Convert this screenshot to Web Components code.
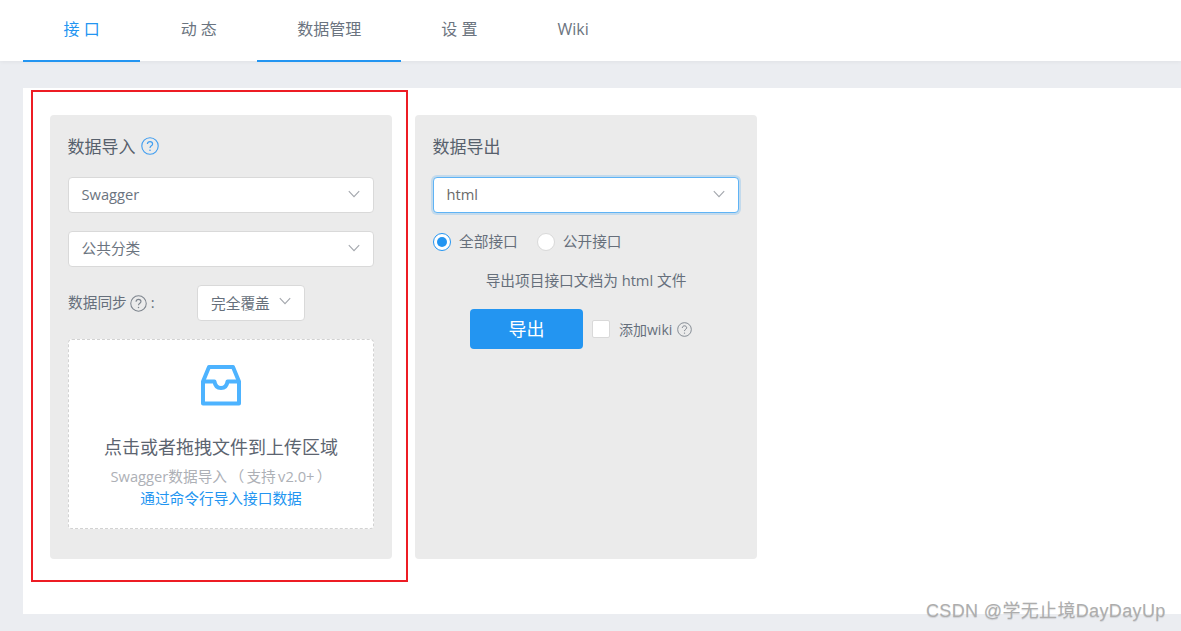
<!DOCTYPE html>
<html lang="zh"><head><meta charset="utf-8"><title>数据管理</title>
<style>
html,body{margin:0;height:631px;overflow:hidden}
body{background:#ebedf1;font:14.7px "Open Sans","Noto Sans CJK SC",sans-serif;color:#5f6a78;position:relative}
</style></head><body>
<app-nav></app-nav>
<app-content>
  <data-panel heading="数据导入" help>
    <ui-select value="Swagger" class="row"></ui-select>
    <ui-select value="公共分类" class="row"></ui-select>
    <sync-row></sync-row>
    <upload-box></upload-box>
  </data-panel>
  <data-panel heading="数据导出">
    <ui-select value="html" focused class="row"></ui-select>
    <export-form></export-form>
  </data-panel>
</app-content>
<red-mark></red-mark>
<water-mark>CSDN @学无止境DayDayUp</water-mark>
<script>
const chev=`<svg width="12" height="8" viewBox="0 0 12 8" fill="none" stroke="#a3a7ad" stroke-width="1.1"><path d="M.8 1.2 6 6.6l5.2-5.4"/></svg>`;
const help=(s,c)=>`<svg width="${s}" height="${s}" viewBox="0 0 18 18" fill="none" stroke="${c}" style="display:block"><circle cx="9" cy="9" r="8.2" stroke-width="1.1"/><path d="M6.4 7.1c0-1.5 1.1-2.5 2.6-2.5s2.6 1 2.6 2.3c0 1.9-2.6 1.9-2.6 4" stroke-width="1.2"/><circle cx="9" cy="13.3" r=".8" fill="${c}" stroke="none"/></svg>`;
function def(name,css,html){customElements.define(name,class extends HTMLElement{connectedCallback(){if(this.shadowRoot)return;const r=this.attachShadow({mode:"open"});r.innerHTML=`<style>${css}</style>`+(typeof html==="function"?html(this):html);}});}

def("app-nav",`:host{display:flex;height:61px;background:#fff;padding:0 0 0 23px;box-shadow:0 1px 4px rgba(0,0,0,.05);position:relative;font-size:16px;color:#6b7480}
a{display:flex;align-items:center;justify-content:center;padding:0 40.5px;height:60px;border-bottom:2px solid transparent;line-height:1}
span{position:relative;top:-1px}
.on{border-color:#2395f1}.act{color:#2395f1}`,
`<a class="on act"><span>接 口</span></a><a><span>动 态</span></a><a class="on" style="padding:0 40px"><span>数据管理</span></a><a style="padding:0 40px"><span>设 置</span></a><a style="padding:0 40px"><span>Wiki</span></a>`);

def("app-content",`:host{display:flex;align-items:flex-start;gap:23px;box-sizing:border-box;margin:27px 0 0 23px;height:526px;background:#fff;padding:27px 0 0 27px}`,`<slot></slot>`);

def("data-panel",`:host{display:block;box-sizing:border-box;width:342px;height:444px;background:#ebebeb;border-radius:4px;padding:0 18px}
h2{margin:0;height:62px;display:flex;align-items:center;gap:5px;font-weight:400;font-size:17px;color:#57606c}
h2 span{position:relative;top:-1px;left:-.5px}
::slotted(.row){margin-bottom:18px}`,
h=>`<h2><span>${h.getAttribute("heading")}</span>${h.hasAttribute("help")?help(18,"#3f9df0"):""}</h2><slot></slot>`);

def("ui-select",`:host{display:flex;align-items:center;justify-content:space-between;box-sizing:border-box;height:36px;background:#fff;border:1px solid #d9d9d9;border-radius:4px;padding:0 13px;color:#6b7480}
:host([focused]){border-color:#5fb3f5;box-shadow:0 0 0 2px rgba(35,149,241,.2);color:#6b6b6b}
svg{display:block;position:relative;top:-1px}
span{position:relative;top:-1.5px;left:-.5px}`,
h=>`<span>${h.getAttribute("value")}</span>${chev}`);

def("sync-row",`:host{display:flex;align-items:center;height:36px;margin-bottom:18px;color:#666f7b}
b{font-weight:400;display:flex;align-items:center;gap:3px;width:129px}
b span{position:relative;top:-2px}
i{font-style:normal;margin-left:1px;position:relative;top:-1px}
div{box-sizing:border-box;width:108px;height:36px;background:#fff;border:1px solid #d9d9d9;border-radius:4px;display:flex;align-items:center;justify-content:space-between;padding:0 13px;color:#666f7b}
div span{position:relative;top:-1px}
div svg{position:relative;top:-2px}
svg{display:block}`,
`<b><span>数据同步</span> ${help(17,"#7d848d")}<i>:</i></b><div><span>完全覆盖</span>${chev}</div>`);

def("upload-box",`:host{display:flex;flex-direction:column;align-items:center;box-sizing:border-box;height:190px;background:#fff;border:1px dashed #d2d2d2;border-radius:4px;padding-top:25px}
svg{display:block}
p{margin:0;text-align:center}
.t{font-size:18px;line-height:26px;color:#5c6470;margin-top:28px}
.s{color:#adb0b6;line-height:21px;margin-top:6px;word-spacing:-1.5px}
.l{color:#2395f1;line-height:22px}`,
`<svg width="40" height="41" viewBox="0 0 40 41" fill="none" stroke="#4db3ff" stroke-width="4" stroke-linejoin="round"><path d="M8 2h24l6 14.500V38.500H2V16.500Z"/><path d="M2 16.500h11.500c.5 4 3 6.500 6.500 6.500s6-2.500 6.500-6.500H38"/></svg>
<p class="t">点击或者拖拽文件到上传区域</p><p class="s">Swagger数据导入 （ 支持 v2.0+ ）</p><p class="l">通过命令行导入接口数据</p>`);

def("export-form",`:host{display:block;color:#666f7b}
.r{display:flex;align-items:center;height:22px}
.c{box-sizing:border-box;width:18px;height:18px;border-radius:50%;background:#fff;border:1px solid #d9d9d9;margin-right:8px;flex:none}
.c.on{border-color:#2395f1;display:flex;align-items:center;justify-content:center}
.c.on::after{content:"";width:10px;height:10px;border-radius:50%;background:#2395f1}
.r span{margin-right:19px;position:relative;top:-1.5px}
.d{text-align:center;line-height:22px;margin-top:16px}
.a{display:flex;align-items:center;margin:18px 0 0 37px}
button{font:inherit;font-size:18px;width:113px;height:40px;border:0;border-radius:4px;background:#2395f1;color:#fff;padding:0 0 2px;margin-right:9px}
.k{box-sizing:border-box;width:18px;height:18px;background:#fff;border:1px solid #d9d9d9;border-radius:2px;margin-right:9px}
.w{display:flex;align-items:center;gap:5px;font-size:14px}
.w span{position:relative;top:-.5px}`,
`<div class="r"><div class="c on"></div><span>全部接口</span><div class="c"></div><span>公开接口</span></div>
<div class="d">导出项目接口文档为 html 文件</div>
<div class="a"><button>导出</button><div class="k"></div><div class="w"><span>添加wiki</span> ${help(15,"#7d848d")}</div></div>`);

def("red-mark",`:host{position:absolute;left:31px;top:90px;width:377px;height:492px;box-sizing:border-box;border:2px solid #ed1c24}`,``);
def("water-mark",`:host{position:absolute;left:926px;top:599px;font:18px/24px "Liberation Sans","Noto Sans CJK SC",sans-serif;letter-spacing:.35px;color:#adadad;white-space:nowrap;text-shadow:0 1px 1px rgba(0,0,0,.12)}`,`<slot></slot>`);
</script>
</body></html>
